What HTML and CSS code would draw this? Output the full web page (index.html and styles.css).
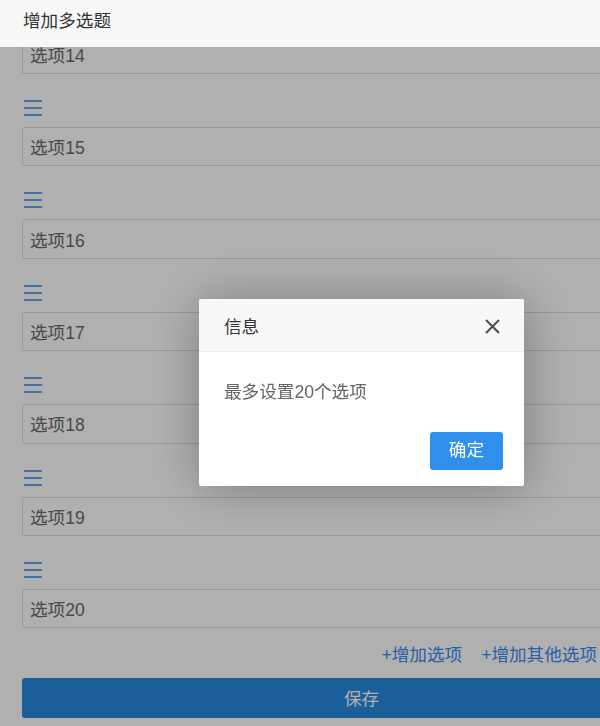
FILE: index.html
```html
<!DOCTYPE html>
<html lang="zh-CN">
<head>
<meta charset="utf-8">
<title>增加多选题</title>
<link rel="stylesheet" href="styles.css">
</head>
<body>
<header class="topbar">增加多选题</header>

<main class="form">
  <div class="option first"><input class="opt-input" type="text" value="选项14"></div>
  <div class="option">
    <div class="handle"><svg width="18" height="16" viewBox="0 0 18 16"><rect x="0" y="0" width="18" height="2"/><rect x="0" y="7" width="18" height="2"/><rect x="0" y="14" width="18" height="2"/></svg></div>
    <input class="opt-input" type="text" value="选项15">
  </div>
  <div class="option">
    <div class="handle"><svg width="18" height="16" viewBox="0 0 18 16"><rect x="0" y="0" width="18" height="2"/><rect x="0" y="7" width="18" height="2"/><rect x="0" y="14" width="18" height="2"/></svg></div>
    <input class="opt-input" type="text" value="选项16">
  </div>
  <div class="option">
    <div class="handle"><svg width="18" height="16" viewBox="0 0 18 16"><rect x="0" y="0" width="18" height="2"/><rect x="0" y="7" width="18" height="2"/><rect x="0" y="14" width="18" height="2"/></svg></div>
    <input class="opt-input" type="text" value="选项17">
  </div>
  <div class="option">
    <div class="handle"><svg width="18" height="16" viewBox="0 0 18 16"><rect x="0" y="0" width="18" height="2"/><rect x="0" y="7" width="18" height="2"/><rect x="0" y="14" width="18" height="2"/></svg></div>
    <input class="opt-input" type="text" value="选项18">
  </div>
  <div class="option">
    <div class="handle"><svg width="18" height="16" viewBox="0 0 18 16"><rect x="0" y="0" width="18" height="2"/><rect x="0" y="7" width="18" height="2"/><rect x="0" y="14" width="18" height="2"/></svg></div>
    <input class="opt-input" type="text" value="选项19">
  </div>
  <div class="option">
    <div class="handle"><svg width="18" height="16" viewBox="0 0 18 16"><rect x="0" y="0" width="18" height="2"/><rect x="0" y="7" width="18" height="2"/><rect x="0" y="14" width="18" height="2"/></svg></div>
    <input class="opt-input" type="text" value="选项20">
  </div>

  <div class="links">
    <a class="add-link" href="#">+增加选项</a>
    <a class="add-link" href="#">+增加其他选项</a>
  </div>

  <button class="save-btn" type="button">保存</button>
</main>

<div class="shade"></div>

<div class="dialog">
  <div class="dialog-title">
    <span>信息</span>
    <svg class="close" width="15" height="15" viewBox="0 0 15 15"><path d="M1 1 L14 14 M14 1 L1 14" stroke="#4d4d55" stroke-width="2" fill="none"/></svg>
  </div>
  <div class="dialog-body">最多设置20个选项</div>
  <div class="dialog-btns"><a class="ok-btn" href="#">确定</a></div>
</div>
</body>
</html>
```

FILE: styles.css
```css
html, body {
  margin: 0;
  padding: 0;
  width: 600px;
  height: 726px;
  overflow: hidden;
  background: #fff;
  font-family: "Liberation Sans", "Noto Sans CJK SC", sans-serif;
  font-size: 17.6px;
  color: #333;
}

.topbar {
  position: fixed;
  top: 0;
  left: 0;
  width: 100%;
  height: 47px;
  line-height: 42px;
  padding-left: 23px;
  box-sizing: border-box;
  background: #f8f8f8;
  color: #333;
  z-index: 30;
}

.form {
  padding: 34.6px 0 0 22px;
}

.option {
  display: flex;
  flex-direction: column;
}

.handle {
  height: 16px;
  margin: 25.9px 0 11px 1.5px;
  display: flex;
}

.handle svg {
  fill: #67a3f0;
}

.opt-input {
  display: block;
  width: 679px;
  height: 39.5px;
  box-sizing: border-box;
  border: 1px solid #dddddd;
  border-radius: 3px;
  padding: 0 7px;
  margin: 0;
  font-family: inherit;
  font-size: 17.6px;
  color: #6b6b6b;
  background: #fff;
  outline: none;
}

.links {
  display: flex;
  justify-content: flex-end;
  gap: 19px;
  width: 575px;
  margin-top: 13.5px;
  line-height: 26px;
}

.add-link {
  color: #398cf3;
  text-decoration: none;
}

.save-btn {
  display: block;
  width: 679px;
  height: 40px;
  margin-top: 10px;
  border: none;
  border-radius: 3px;
  background: #2788df;
  color: #ffffff;
  font-family: inherit;
  font-size: 17.6px;
  padding: 0;
}

.shade {
  position: fixed;
  inset: 0;
  background: #000;
  opacity: 0.31;
  z-index: 10;
}

.dialog {
  position: fixed;
  left: 199px;
  top: 299px;
  width: 325px;
  background: #fff;
  border-radius: 2px;
  box-shadow: 1px 1px 50px rgba(0, 0, 0, 0.3);
  z-index: 20;
}

.dialog-title {
  height: 53px;
  box-sizing: border-box;
  display: flex;
  align-items: center;
  justify-content: space-between;
  padding: 0 24px 0 25px;
  background: #f8f8f8;
  border-bottom: 1px solid #eeeeee;
  border-radius: 2px 2px 0 0;
  color: #333;
}

.close {
  margin-top: 2px;
}

.dialog-body {
  padding: 25px 25px;
  line-height: 30px;
  color: #666;
}

.dialog-btns {
  display: flex;
  justify-content: flex-end;
  padding: 0 21px 16px;
}

.ok-btn {
  display: block;
  height: 37.5px;
  line-height: 37.5px;
  padding: 0 19px;
  border-radius: 3px;
  background: #2e8fec;
  color: #fff;
  text-decoration: none;
}
```
